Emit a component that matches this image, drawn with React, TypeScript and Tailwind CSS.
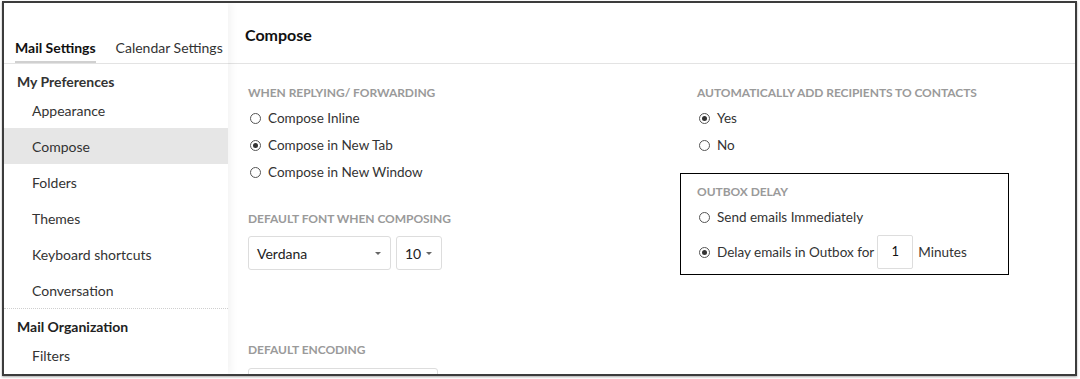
import React from "react";

function Radio({ checked }: { checked?: boolean }) {
  return (
    <span className="inline-flex h-[11px] w-[11px] shrink-0 items-center justify-center rounded-full border-[1.5px] border-[#555]">
      {checked && <span className="h-[5px] w-[5px] rounded-full bg-[#333]" />}
    </span>
  );
}

function Option({ label, checked }: { label: string; checked?: boolean }) {
  return (
    <div className="flex h-[27px] items-center gap-[7px] pl-[2px] text-[13.5px] text-[#333]">
      <Radio checked={checked} />
      <span>{label}</span>
    </div>
  );
}

function Label({ children }: { children: React.ReactNode }) {
  return (
    <div className="text-[12px] font-bold uppercase leading-[16px] tracking-[-0.05px] text-[#9a9a9a]">
      {children}
    </div>
  );
}

function Caret() {
  return <span className="inline-block h-0 w-0 border-x-[3px] border-t-[3px] border-x-transparent border-t-[#666]" />;
}

export default function App() {
  const items = ["Appearance", "Compose", "Folders", "Themes", "Keyboard shortcuts", "Conversation"];
  return (
    <div className="h-[379px] w-[1080px] bg-white pl-[2px] pt-[1px]" style={{ fontFamily: "Lato, 'Open Sans', sans-serif" }}>
      <div className="flex h-[375px] w-[1075px] overflow-hidden border-2 border-[#3c3c3c] bg-white shadow-[0_1px_2px_rgba(0,0,0,0.35)]">
        {/* Sidebar */}
        <div className="relative z-10 flex w-[224px] shrink-0 flex-col bg-white shadow-[3px_0_8px_rgba(0,0,0,0.05)]">
          <div className="flex h-[61px] shrink-0 items-end border-b border-[#e3e3e3] pl-[11px] text-[14px]">
            <div className="border-b-2 border-[#d0d0d0] pb-[3px] font-bold text-[#111]">Mail Settings</div>
            <div className="ml-[20px] pb-[5px] text-[#333]">Calendar Settings</div>
          </div>
          <div className="h-[28px] shrink-0 pl-[13px] pt-[8px] text-[14px] font-bold leading-[20px] text-[#333]">My Preferences</div>
          {items.map((it) => (
            <div
              key={it}
              className={`flex h-[36px] shrink-0 items-center pl-[28px] text-[14px] text-[#333] ${it === "Compose" ? "bg-[#e6e6e6] text-[#111]" : ""}`}
            >
              {it}
            </div>
          ))}
          <div className="border-t border-dotted border-[#cfcfcf]" />
          <div className="flex h-[34px] shrink-0 items-center pl-[13px] text-[14px] font-bold text-[#222]">Mail Organization</div>
          <div className="flex h-[24px] shrink-0 items-center pl-[28px] text-[14px] text-[#333]">Filters</div>
        </div>
        {/* Main */}
        <div className="flex min-w-0 flex-1 flex-col">
          <div className="flex h-[61px] shrink-0 items-center border-b border-[#e3e3e3] pl-[17px] pt-[4px] text-[16px] font-bold text-[#111]">
            Compose
          </div>
          <div className="flex pl-[20px] pt-[21px]">
            <div className="w-[449px] shrink-0">
              <Label>When replying/ forwarding</Label>
              <div className="mt-[4px]">
                <Option label="Compose Inline" />
                <Option label="Compose in New Tab" checked />
                <Option label="Compose in New Window" />
              </div>
              <div className="mt-[25px]">
                <Label>Default font when composing</Label>
              </div>
              <div className="mt-[9px] flex gap-[5px]">
                <div className="flex h-[34px] w-[143px] items-center justify-between rounded-[3px] border border-[#ddd] pl-[8px] pr-[9px] text-[14px] text-[#222]">
                  <span>Verdana</span>
                  <Caret />
                </div>
                <div className="flex h-[34px] w-[46px] items-center gap-[5px] rounded-[3px] border border-[#ddd] pl-[8px] text-[14px] text-[#222]">
                  <span>10</span>
                  <Caret />
                </div>
              </div>
              <div className="mt-[72px]">
                <Label>Default encoding</Label>
              </div>
              <div className="mt-[10px] h-[34px] w-[190px] rounded-[3px] border border-[#ddd]" />
            </div>
            <div className="flex flex-col">
              <Label>Automatically add recipients to contacts</Label>
              <div className="mt-[4px]">
                <Option label="Yes" checked />
                <Option label="No" />
              </div>
              <div className="ml-[-17px] mt-[14px] w-[329px] border border-black pb-[5px] pl-[16px] pt-[10px]">
                <Label>Outbox delay</Label>
                <div className="mt-[4px]">
                  <Option label="Send emails Immediately" />
                </div>
                <div className="mt-[4px] flex items-center gap-[7px] pl-[2px] text-[13.5px] text-[#333]">
                  <Radio checked />
                  <span>Delay emails in Outbox for</span>
                  <span className="ml-[-4px] flex h-[34px] w-[36px] items-center justify-center rounded-[2px] border border-[#ddd] text-[13px] text-[#111]">
                    1
                  </span>
                  <span className="ml-[-2px]">Minutes</span>
                </div>
              </div>
            </div>
          </div>
        </div>
      </div>
    </div>
  );
}
